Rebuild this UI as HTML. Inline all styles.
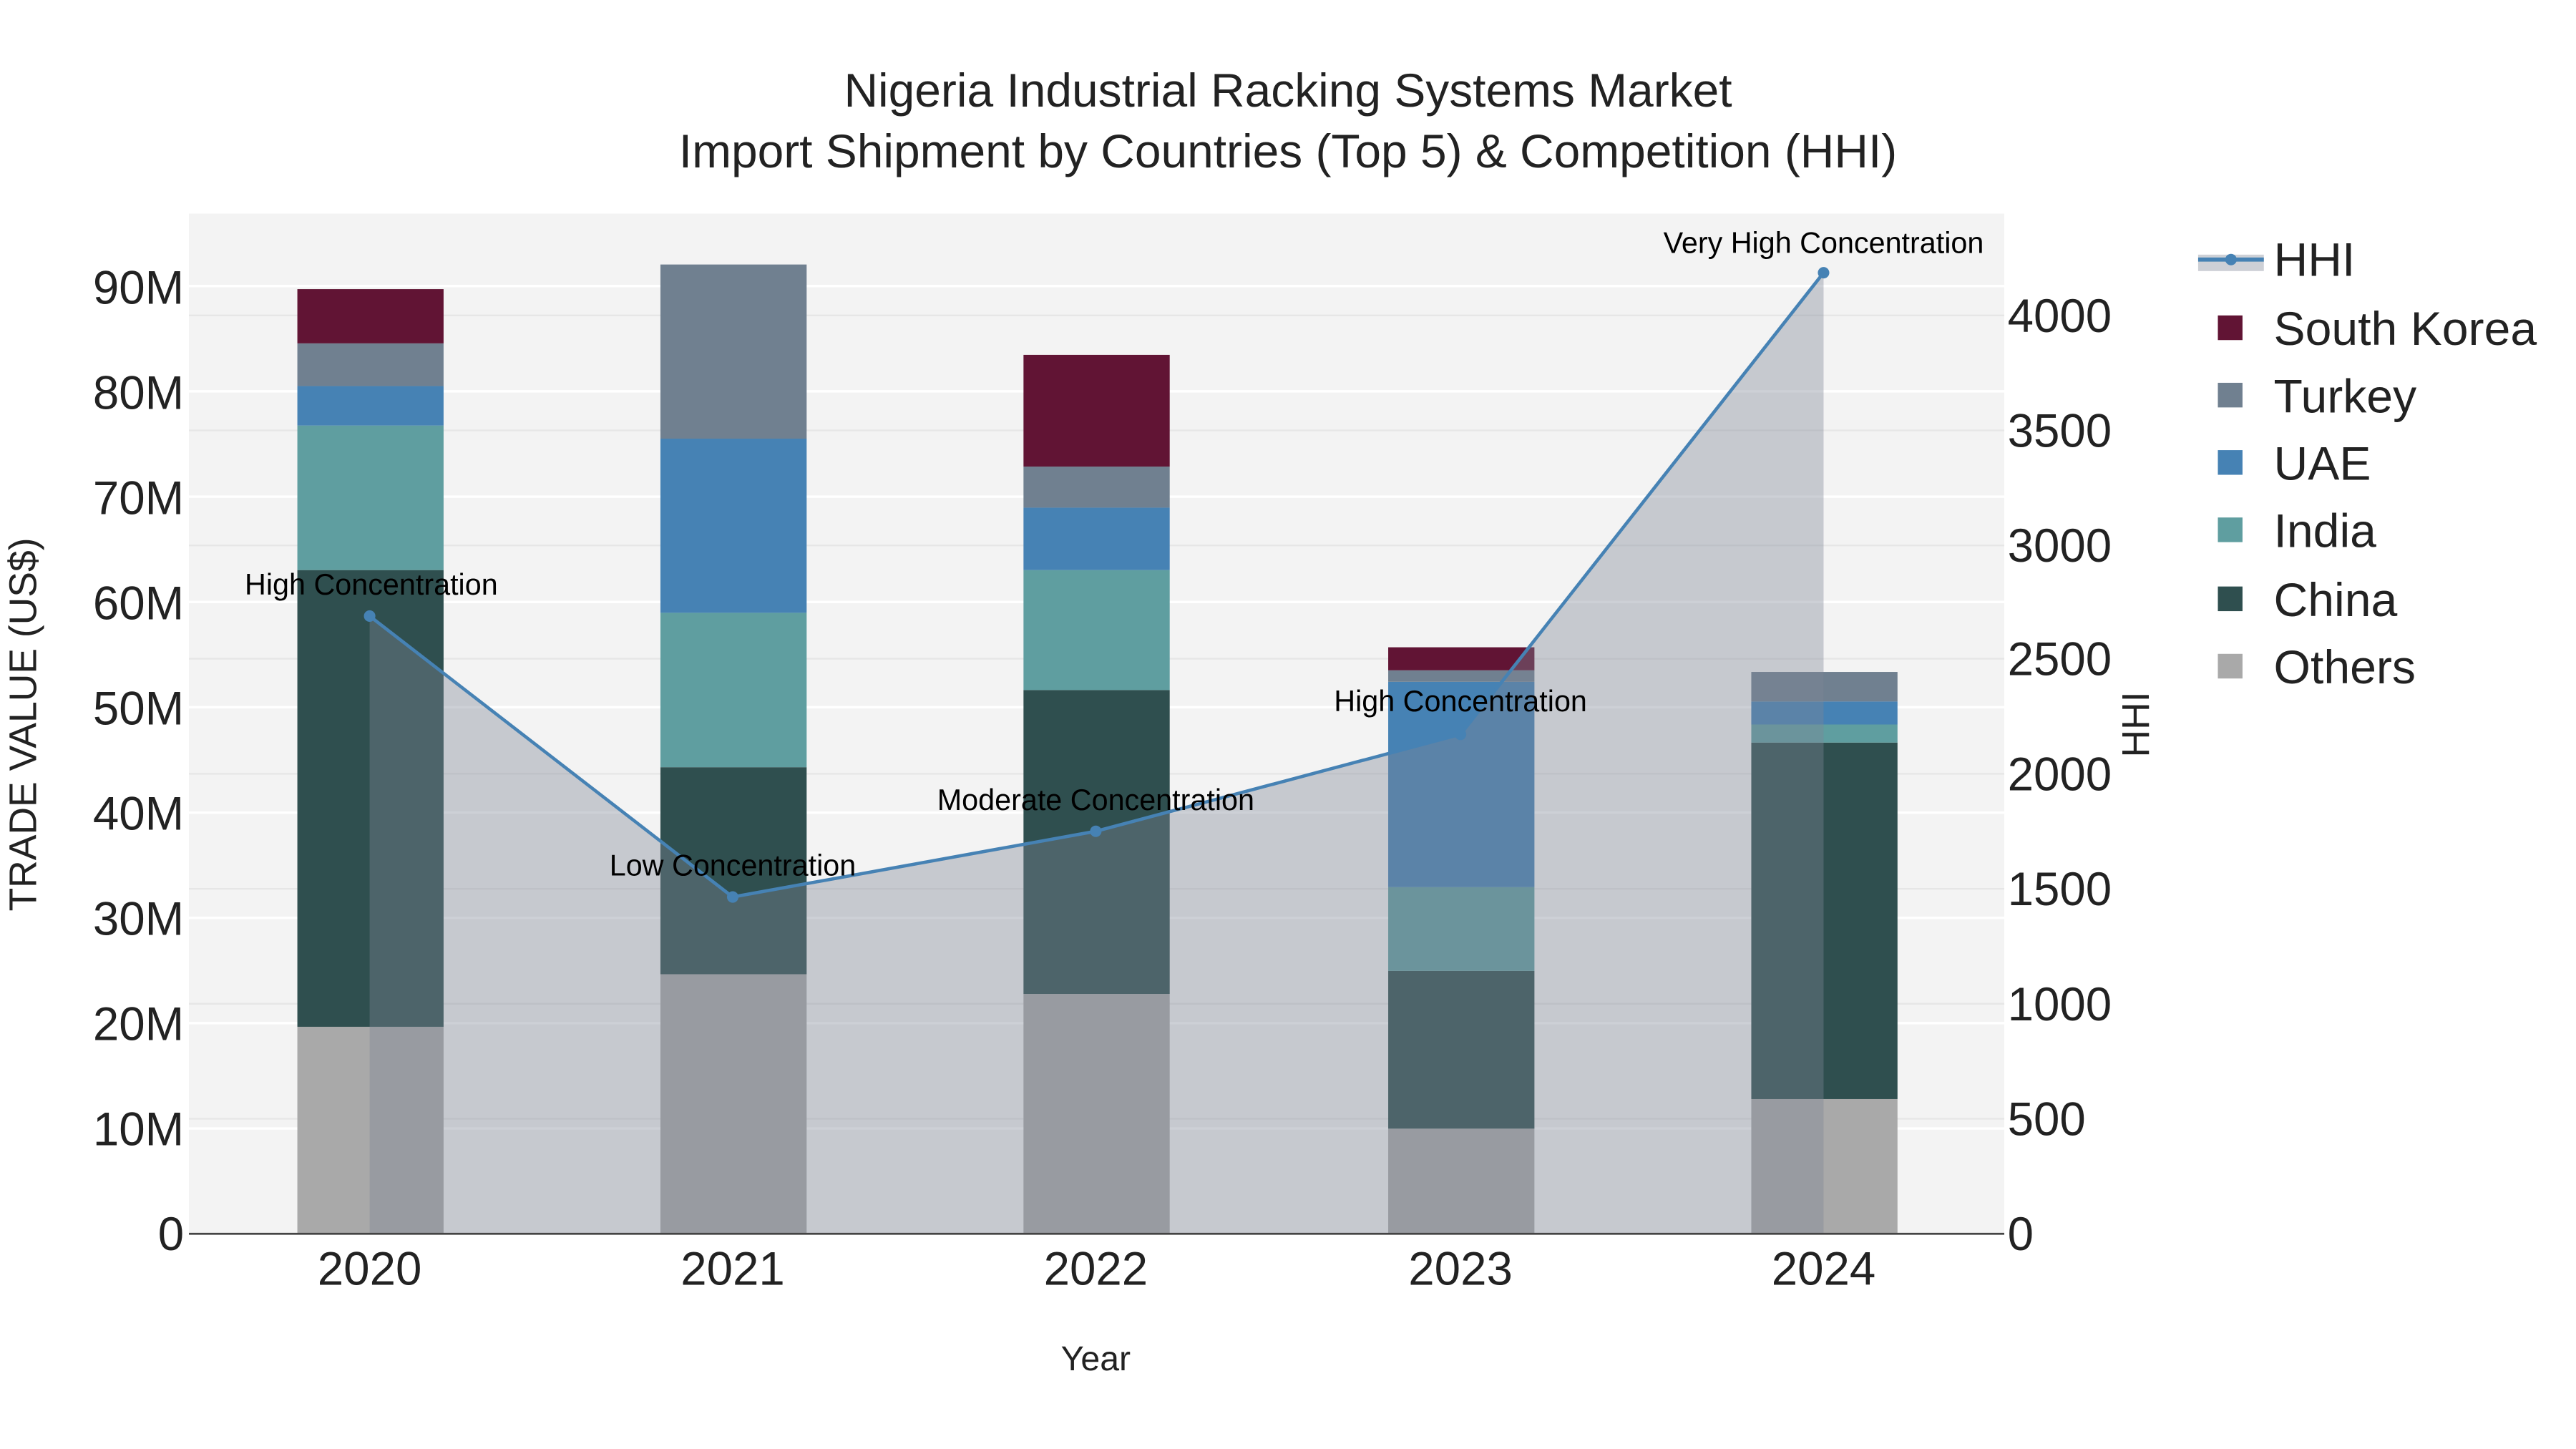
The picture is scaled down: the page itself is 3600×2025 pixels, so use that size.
<!DOCTYPE html>
<html><head><meta charset="utf-8"><style>
html,body{margin:0;padding:0;background:#fff;}
svg{display:block;}
text{font-family:"Liberation Sans",Arial,sans-serif;}
</style></head><body>
<svg width="3600" height="2025" viewBox="0 0 1568 882" xmlns="http://www.w3.org/2000/svg">
<rect width="1568" height="882" fill="#fff"/>
<rect x="115" y="130" width="1105" height="621" fill="#f3f3f3"/>
<g stroke="#ffffff" stroke-width="1.5">
<line x1="115" x2="1220" y1="686.9" y2="686.9"/><line x1="115" x2="1220" y1="622.8" y2="622.8"/>
<line x1="115" x2="1220" y1="558.7" y2="558.7"/><line x1="115" x2="1220" y1="494.6" y2="494.6"/>
<line x1="115" x2="1220" y1="430.5" y2="430.5"/><line x1="115" x2="1220" y1="366.4" y2="366.4"/>
<line x1="115" x2="1220" y1="302.3" y2="302.3"/><line x1="115" x2="1220" y1="238.2" y2="238.2"/>
<line x1="115" x2="1220" y1="174.1" y2="174.1"/>
</g>
<g stroke="#e6e6e6" stroke-width="1">
<line x1="115" x2="1220" y1="681" y2="681"/><line x1="115" x2="1220" y1="611" y2="611"/>
<line x1="115" x2="1220" y1="541" y2="541"/><line x1="115" x2="1220" y1="471" y2="471"/>
<line x1="115" x2="1220" y1="401" y2="401"/><line x1="115" x2="1220" y1="332" y2="332"/>
<line x1="115" x2="1220" y1="262" y2="262"/><line x1="115" x2="1220" y1="192" y2="192"/>
</g>
<g>
<rect x="181" y="625" width="89" height="126" fill="#a9a9a9"/>
<rect x="181" y="347" width="89" height="278" fill="#2f4f4f"/>
<rect x="181" y="259" width="89" height="88" fill="#5f9ea0"/>
<rect x="181" y="235" width="89" height="24" fill="#4682b4"/>
<rect x="181" y="209" width="89" height="26" fill="#708090"/>
<rect x="181" y="176" width="89" height="33" fill="#611434"/>

<rect x="402" y="593" width="89" height="158" fill="#a9a9a9"/>
<rect x="402" y="467" width="89" height="126" fill="#2f4f4f"/>
<rect x="402" y="373" width="89" height="94" fill="#5f9ea0"/>
<rect x="402" y="267" width="89" height="106" fill="#4682b4"/>
<rect x="402" y="161" width="89" height="106" fill="#708090"/>

<rect x="623" y="605" width="89" height="146" fill="#a9a9a9"/>
<rect x="623" y="420" width="89" height="185" fill="#2f4f4f"/>
<rect x="623" y="347" width="89" height="73" fill="#5f9ea0"/>
<rect x="623" y="309" width="89" height="38" fill="#4682b4"/>
<rect x="623" y="284" width="89" height="25" fill="#708090"/>
<rect x="623" y="216" width="89" height="68" fill="#611434"/>

<rect x="845" y="687" width="89" height="64" fill="#a9a9a9"/>
<rect x="845" y="591" width="89" height="96" fill="#2f4f4f"/>
<rect x="845" y="540" width="89" height="51" fill="#5f9ea0"/>
<rect x="845" y="415" width="89" height="125" fill="#4682b4"/>
<rect x="845" y="408" width="89" height="7" fill="#708090"/>
<rect x="845" y="394" width="89" height="14" fill="#611434"/>

<rect x="1066" y="669" width="89" height="82" fill="#a9a9a9"/>
<rect x="1066" y="452" width="89" height="217" fill="#2f4f4f"/>
<rect x="1066" y="441" width="89" height="11" fill="#5f9ea0"/>
<rect x="1066" y="427" width="89" height="14" fill="#4682b4"/>
<rect x="1066" y="409" width="89" height="18" fill="#708090"/>
</g>
<polygon points="225,751 225,375 446,546 667,506 889,447 1110,166 1110,751" fill="rgb(125,133,150)" fill-opacity="0.39"/>
<polyline points="225,375 446,546 667,506 889,447 1110,166" fill="none" stroke="#4682b4" stroke-width="2"/>
<g fill="#4682b4"><circle cx="225" cy="375" r="3.5"/><circle cx="446" cy="546" r="3.5"/><circle cx="667" cy="506" r="3.5"/><circle cx="889" cy="447" r="3.5"/><circle cx="1110" cy="166" r="3.5"/></g>
<line x1="115" x2="1220" y1="751" y2="751" stroke="#444" stroke-width="1.2"/>
<g font-size="18" fill="#000" text-anchor="middle">
<text x="226" y="362">High Concentration</text>
<text x="446" y="533">Low Concentration</text>
<text x="667" y="493">Moderate Concentration</text>
<text x="889" y="433">High Concentration</text>
<text x="1110" y="154">Very High Concentration</text>
</g>
<g font-size="28.5" fill="#222" text-anchor="end">
<text x="112" y="761">0</text><text x="112" y="697">10M</text><text x="112" y="633">20M</text>
<text x="112" y="569">30M</text><text x="112" y="505">40M</text><text x="112" y="441">50M</text>
<text x="112" y="377">60M</text><text x="112" y="313">70M</text><text x="112" y="249">80M</text>
<text x="112" y="185">90M</text>
</g>
<g font-size="28.5" fill="#222" text-anchor="start">
<text x="1222" y="761">0</text><text x="1222" y="691">500</text><text x="1222" y="621">1000</text>
<text x="1222" y="551">1500</text><text x="1222" y="481">2000</text><text x="1222" y="411">2500</text>
<text x="1222" y="342">3000</text><text x="1222" y="272">3500</text><text x="1222" y="202">4000</text>
</g>
<g font-size="28.5" fill="#222" text-anchor="middle">
<text x="225" y="782">2020</text><text x="446" y="782">2021</text><text x="667" y="782">2022</text>
<text x="889" y="782">2023</text><text x="1110" y="782">2024</text>
</g>
<text x="667" y="834" font-size="21" text-anchor="middle" fill="#222">Year</text>
<text transform="translate(22,441) rotate(-90)" font-size="23.3" text-anchor="middle" fill="#222">TRADE VALUE (US$)</text>
<text transform="translate(1308,441) rotate(-90)" font-size="23.3" text-anchor="middle" fill="#222">HHI</text>
<g font-size="28.7" fill="#222" text-anchor="middle">
<text x="784" y="65">Nigeria Industrial Racking Systems Market</text>
<text x="784" y="102">Import Shipment by Countries (Top 5) &amp; Competition (HHI)</text>
</g>
<rect x="1338" y="155" width="40" height="10" fill="rgb(125,133,150)" fill-opacity="0.39"/>
<line x1="1338" x2="1378" y1="158" y2="158" stroke="#4682b4" stroke-width="2.5"/>
<circle cx="1358" cy="158" r="3.5" fill="#4682b4"/>
<rect x="1350" y="192" width="15" height="15" fill="#611434"/>
<rect x="1350" y="233" width="15" height="15" fill="#708090"/>
<rect x="1350" y="274" width="15" height="15" fill="#4682b4"/>
<rect x="1350" y="315" width="15" height="15" fill="#5f9ea0"/>
<rect x="1350" y="357" width="15" height="15" fill="#2f4f4f"/>
<rect x="1350" y="398" width="15" height="15" fill="#a9a9a9"/>
<g font-size="28.8" fill="#222">
<text x="1384" y="168">HHI</text>
<text x="1384" y="210">South Korea</text>
<text x="1384" y="251">Turkey</text>
<text x="1384" y="292">UAE</text>
<text x="1384" y="333">India</text>
<text x="1384" y="375">China</text>
<text x="1384" y="416">Others</text>
</g>
</svg>
</body></html>
